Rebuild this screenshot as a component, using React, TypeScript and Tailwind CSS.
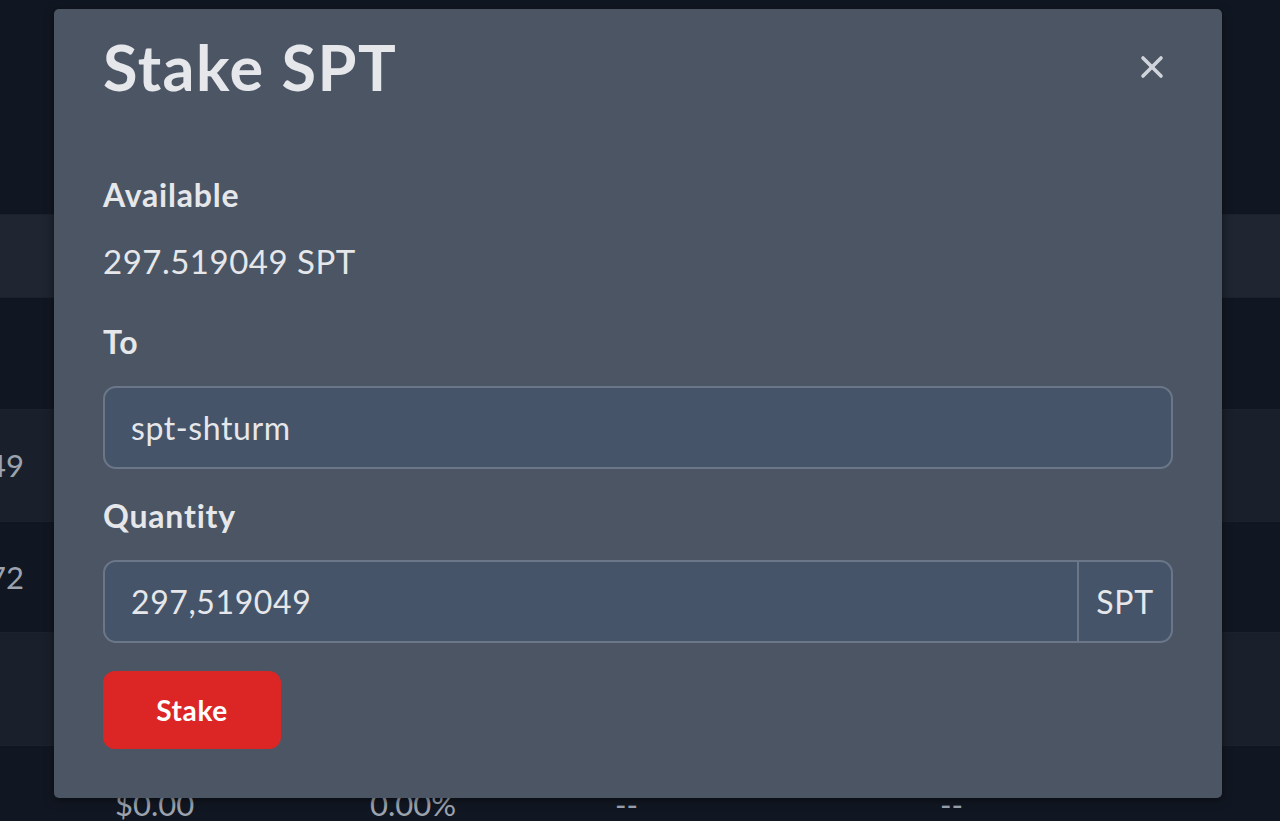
import { X } from "lucide-react";

const rows = [
  { h: "h-[215px]", bg: "bg-[#111722]", cells: [] as string[] },
  { h: "h-[83px]", bg: "bg-[#1f2631]", cells: [] },
  { h: "h-[112px]", bg: "bg-[#111722]", cells: [] },
  { h: "h-[112px]", bg: "bg-[#1a202b]", cells: ["49"] },
  { h: "h-[111px]", bg: "bg-[#111722]", cells: ["72"] },
  { h: "h-[113px]", bg: "bg-[#1a202b]", cells: [] },
];

function Label({ children }: { children: string }) {
  return <p className="text-[32px] leading-[48px] font-bold tracking-[0.8px] text-[#e5e7eb]">{children}</p>;
}

export default function App() {
  return (
    <div className="relative h-[821px] w-[1280px] overflow-hidden bg-[#111722] font-['Lato',sans-serif]">
      {rows.map((row, i) => (
        <div key={i} className={`${row.h} ${row.bg} flex items-center border-b border-[#1c222c]`}>
          {row.cells.map((c) => (
            <span key={c} className="-ml-[12px] text-[31px] text-[#9ca3af]">
              {c}
            </span>
          ))}
        </div>
      ))}
      <div className="flex h-[75px] items-start pt-[34px] text-[31px] leading-[48px] text-[#9ca3af]">
        <span className="ml-[115px] w-[255px]">$0.00</span>
        <span className="w-[245px]">0.00%</span>
        <span className="w-[325px]">--</span>
        <span>--</span>
      </div>

      <div className="absolute top-[9px] left-[54px] flex h-[789px] w-[1168px] flex-col rounded-[5px] bg-[#4b5563] px-[49px] pt-[20px] shadow-[0_2px_10px_rgba(0,0,0,0.5)]">
        <div className="flex h-[75px] items-center justify-between">
          <h1 className="text-[63px] leading-[75px] font-bold tracking-[1.5px] text-[#e5e7eb]">Stake SPT</h1>
          <button className="mr-[3px] text-[#d1d5db]">
            <X size={36} strokeWidth={2.4} />
          </button>
        </div>

        <div className="mt-[67px]">
          <Label>Available</Label>
        </div>
        <p className="mt-[18px] text-[33px] leading-[48px] tracking-[0.5px] text-[#e5e7eb]">297.519049 SPT</p>

        <div className="mt-[33px]">
          <Label>To</Label>
        </div>
        <div className="mt-[20px] flex h-[83px] items-center rounded-[13px] border-2 border-[#6b7789] bg-[#455468] px-[26px] text-[32px] tracking-[0.6px] text-[#e5e7eb]">
          spt-shturm
        </div>

        <div className="mt-[23px]">
          <Label>Quantity</Label>
        </div>
        <div className="mt-[20px] flex h-[83px] overflow-hidden rounded-[13px] border-2 border-[#6b7789] bg-[#455468] text-[32px] tracking-[0.6px] text-[#e5e7eb]">
          <div className="flex flex-1 items-center px-[26px]">297,519049</div>
          <div className="flex w-[94px] items-center justify-center border-l-2 border-[#6b7789]">SPT</div>
        </div>

        <button className="mt-[28px] h-[78px] w-[178px] rounded-[12px] bg-[#dc2626] text-[28px] font-bold tracking-[0.6px] text-white">
          Stake
        </button>
      </div>
    </div>
  );
}
